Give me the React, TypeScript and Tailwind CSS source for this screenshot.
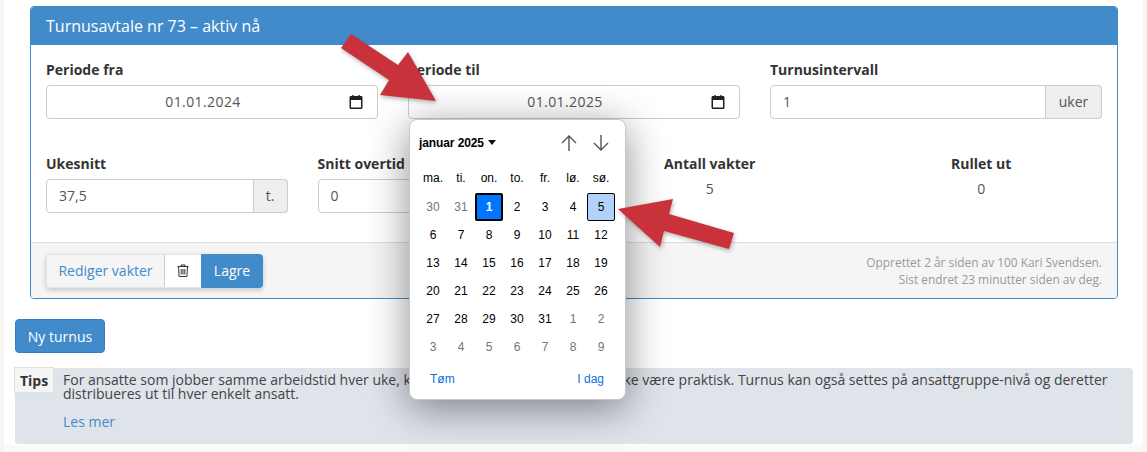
const weekdays = ["ma.", "ti.", "on.", "to.", "fr.", "lø.", "sø."];

const days: { label: number; muted?: boolean }[] = [
  { label: 30, muted: true },
  { label: 31, muted: true },
  ...Array.from({ length: 31 }, (_, i) => ({ label: i + 1 })),
  ...[1, 2, 3, 4, 5, 6, 7, 8, 9].map((label) => ({ label, muted: true })),
];

const inputBase =
  "h-[34px] border border-[#ccc] bg-white text-[14px] text-[#555] flex items-center pb-[1px]";

const CalendarIcon = () => (
  <svg width="14" height="14" viewBox="0 0 14 14" className="shrink-0">
    <path d="M2 1h1.2V0H4.6v1h4.8V0h1.4v1H12c.8 0 1.5.7 1.5 1.4v10c0 .8-.7 1.6-1.5 1.6H2c-.8 0-1.5-.8-1.5-1.6v-10C.5 1.7 1.2 1 2 1zm0 4v7.4h10V5H2z" fill="#1f1f1f" />
  </svg>
);

const DateField = ({ label, value }: { label: string; value: string }) => (
  <div>
    <div className="h-[20px] mb-[5px] text-[14px] leading-[20px] font-bold text-[#333]">{label}</div>
    <div className={`${inputBase} rounded-[4px] pl-[12px] pr-[14px]`}>
      <span className="flex-1 text-center tracking-[0.4px] pr-[2px]">{value}</span>
      <CalendarIcon />
    </div>
  </div>
);

const UnitField = ({ label, value, unit, unitWidth }: { label: string; value: string; unit: string; unitWidth: string }) => (
  <div>
    <div className="h-[20px] mb-[5px] text-[14px] leading-[20px] font-bold text-[#333]">{label}</div>
    <div className="flex">
      <div className={`${inputBase} flex-1 min-w-0 rounded-l-[4px] px-[12px]`}>{value}</div>
      <div className={`${unitWidth} h-[34px] pb-[1px] flex items-center justify-center border border-l-0 border-[#ccc] bg-[#eee] rounded-r-[4px] text-[14px] text-[#555]`}>
        {unit}
      </div>
    </div>
  </div>
);

const Stat = ({ label, value }: { label: string; value: string }) => (
  <div className="text-center">
    <div className="h-[20px] mb-[5px] text-[14px] leading-[20px] font-bold text-[#333]">{label}</div>
    <div className="text-[14px] leading-[20px] text-[#555]">{value}</div>
  </div>
);

const DatePopup = () => (
  <div className="absolute left-[409px] top-[119px] w-[217px] h-[281px] bg-white rounded-[8px] border border-[#c8c8c8] shadow-[0_8px_40px_rgba(0,0,0,0.45)] px-[9px] font-['Liberation_Sans',sans-serif] text-[12px] text-black">
    <div className="h-[45px] flex items-center">
      <span className="text-[12px] font-bold tracking-[-0.1px]">januar 2025</span>
      <svg width="8" height="5" viewBox="0 0 8 5" className="ml-[4px]">
        <path d="M0 0h8L4 5z" fill="#111" />
      </svg>
      <svg width="18" height="18" viewBox="0 0 18 18" className="ml-[auto] mr-[14px]" fill="none" stroke="#555" strokeWidth="1.4">
        <path d="M9 17V2M2 9l7-7 7 7" />
      </svg>
      <svg width="18" height="18" viewBox="0 0 18 18" className="mr-[6px]" fill="none" stroke="#555" strokeWidth="1.4">
        <path d="M9 1v15M2 9l7 7 7-7" />
      </svg>
    </div>
    <div className="grid grid-cols-[repeat(7,28px)] mt-[3px]">
      {weekdays.map((d) => (
        <div key={d} className="h-[20px] flex items-center justify-center">{d}</div>
      ))}
    </div>
    <div className="grid grid-cols-[repeat(7,28px)] auto-rows-[28px] mt-[5px]">
      {days.map((d, i) => {
        if (i === 2) {
          return (
            <div key={i} className="flex items-center justify-center bg-[#0075ff] border-2 border-black rounded-[2px] text-white font-bold">
              {d.label}
            </div>
          );
        }
        if (i === 6) {
          return (
            <div key={i} className="flex items-center justify-center bg-[#b0d2fb] border border-black rounded-[2px]">
              {d.label}
            </div>
          );
        }
        return (
          <div key={i} className={`flex items-center justify-center ${d.muted ? "text-[#757575]" : "text-black"}`}>
            {d.label}
          </div>
        );
      })}
    </div>
    <div className="flex justify-between mt-[3px] pl-[11px] pr-[12px] h-[30px] items-center text-[#0a6fd8]">
      <span>Tøm</span>
      <span>I dag</span>
    </div>
  </div>
);

const Arrows = () => (
  <svg width="1147" height="452" viewBox="0 0 1147 452" className="absolute left-0 top-0 pointer-events-none drop-shadow-[1px_2px_2px_rgba(0,0,0,0.3)]">
    <polygon points="351,34 398,65 408,52 436,101 380,95 389,80 341,48" fill="#c9323a" />
    <polygon points="618,209 673,199 669,214 734,233 729,249 664,231 660,247" fill="#c9323a" />
  </svg>
);

export default function App() {
  return (
    <div className="relative w-[1147px] h-[452px] overflow-hidden bg-[#f8f6f2] font-['Open_Sans',sans-serif]">
      <div className="mx-[4px] w-[1139px] h-[452px] bg-white pt-[6px] flex flex-col">
        <div className="ml-[26px] w-[1088px] h-[293px] flex flex-col border border-[#428bca] rounded-[4px] overflow-hidden">
          <div className="h-[38px] shrink-0 bg-[#428bca] pl-[15px] text-[16px] leading-[38px] text-white">
            Turnusavtale nr 73 – aktiv nå
          </div>
          <div className="flex-1 px-[15px] pt-[15px]">
            <div className="grid grid-cols-3 gap-x-[30px]">
              <DateField label="Periode fra" value="01.01.2024" />
              <DateField label="Periode til" value="01.01.2025" />
              <UnitField label="Turnusintervall" value="1" unit="uker" unitWidth="w-[56px]" />
            </div>
            <div className="grid grid-cols-4 gap-x-[30px] mt-[35px]">
              <UnitField label="Ukesnitt" value="37,5" unit="t." unitWidth="w-[34px]" />
              <UnitField label="Snitt overtid" value="0" unit="t." unitWidth="w-[34px]" />
              <Stat label="Antall vakter" value="5" />
              <Stat label="Rullet ut" value="0" />
            </div>
          </div>
          <div className="h-[56px] shrink-0 bg-[#f5f5f5] border-t border-[#ddd] px-[15px] flex items-center justify-between">
            <div className="flex h-[34px] rounded-[4px] shadow-[0_2px_5px_rgba(0,0,0,0.2)]">
              <div className="w-[119px] flex items-center justify-center bg-[#f5f5f5] border border-[#e6e6e6] border-r-[#ccc] rounded-l-[4px] text-[14px] text-[#428bca]">
                Rediger vakter
              </div>
              <div className="w-[36px] flex items-center justify-center bg-white border-y border-[#e6e6e6]">
                <svg width="12" height="13" viewBox="0 0 12 13" fill="none" stroke="#333" strokeWidth="1">
                  <path d="M0.5 2.5h11M4 2.5V1h4v1.5M1.5 2.5l.6 10h7.8l.6-10M4.2 5v5.5M6 5v5.5M7.8 5v5.5" />
                </svg>
              </div>
              <div className="w-[62px] flex items-center justify-center bg-[#428bca] rounded-r-[4px] text-[14px] text-white">
                Lagre
              </div>
            </div>
            <div className="text-right text-[11.9px] leading-[17px] text-[#999]">
              <div>Opprettet 2 år siden av 100 Kari Svendsen.</div>
              <div>Sist endret 23 minutter siden av deg.</div>
            </div>
          </div>
        </div>
        <div className="ml-[11px] mt-[20px] w-[90px] h-[34px] flex items-center justify-center bg-[#428bca] border border-[#357ebd] rounded-[4px] text-[14px] text-white">
          Ny turnus
        </div>
        <div className="ml-[11px] mt-[15px] w-[1118px] h-[76px] flex bg-[#dfe3ea] rounded-[4px]">
          <div className="-ml-[1px] -mt-[1px] w-[40px] h-[26px] shrink-0 flex items-center justify-center bg-[#f5f5f5] border border-[#e0e0e0] text-[14px] font-bold text-[#333]">
            Tips
          </div>
          <div className="ml-[9px] pt-[5px] text-[14px] text-[#444]">
            <div className="leading-[14px] whitespace-nowrap">
              For ansatte som jobber samme arbeidstid hver uke, kan det å bruke <span className="mr-[4px]">turnus</span> kanskje ikke være praktisk. Turnus kan også settes på ansattgruppe-nivå og deretter
              <br />
              distribueres ut til hver enkelt ansatt.
            </div>
            <div className="mt-[11px] leading-[20px] text-[#428bca]">Les mer</div>
          </div>
        </div>
        <div className="flex-1 mt-[1px] bg-[#fafafa]" />
      </div>
      <DatePopup />
      <Arrows />
    </div>
  );
}
